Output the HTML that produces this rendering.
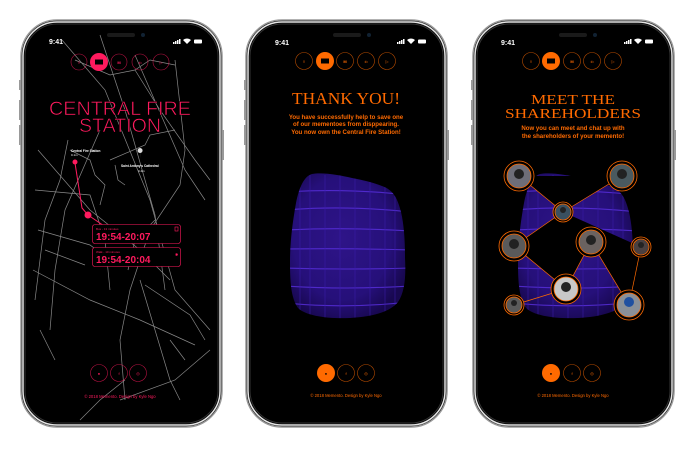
<!DOCTYPE html>
<html><head><meta charset="utf-8"><style>
html,body{margin:0;padding:0;background:#fff;width:696px;height:454px;overflow:hidden}
svg{display:block}
</style></head><body>
<svg width="696" height="454" viewBox="0 0 696 454" xmlns="http://www.w3.org/2000/svg" font-family="Liberation Sans, sans-serif">
<defs>
  <radialGradient id="stone" cx="0.45" cy="0.45" r="0.6">
    <stop offset="0" stop-color="#2e1488"/><stop offset="0.7" stop-color="#26107a"/><stop offset="1" stop-color="#180850"/>
  </radialGradient>
  <clipPath id="blobclip"><path d="M312,174 C322,172 340,175 352,178 C362,180 372,182 382,186 C394,190 398,200 401,212 C404,225 405,240 405,258 C406,275 405,292 398,302 C390,312 372,317 350,318 C328,319 306,316 298,308 C291,298 290,282 290,262 C290,240 293,220 296,203 C299,188 304,176 312,174 Z"/></clipPath>
  <g id="blob">
    <path d="M312,174 C322,172 340,175 352,178 C362,180 372,182 382,186 C394,190 398,200 401,212 C404,225 405,240 405,258 C406,275 405,292 398,302 C390,312 372,317 350,318 C328,319 306,316 298,308 C291,298 290,282 290,262 C290,240 293,220 296,203 C299,188 304,176 312,174 Z" fill="url(#stone)"/>
    <g clip-path="url(#blobclip)" stroke="#5a30e0" stroke-width="1.1" fill="none" opacity="0.8">
      <path d="M285,192 Q345,188 410,195"/><path d="M285,210 Q345,205 410,212"/>
      <path d="M285,230 Q345,227 410,231"/><path d="M285,249 Q345,248 410,250"/>
      <path d="M285,268 Q345,270 410,268"/><path d="M285,286 Q345,290 410,286"/>
      <path d="M285,303 Q345,309 410,302"/>
    </g>
    <g clip-path="url(#blobclip)" stroke="#3a1ca8" stroke-width="0.8" fill="none" opacity="0.7">
      <path d="M310,175V320M325,175V320M340,175V320M355,175V320M370,175V320M385,175V320M300,175V320M395,175V320"/>
    </g>
  </g>
  <g id="phone">
    <rect x="0" y="0" width="201" height="407" rx="36" fill="#000" stroke="#999" stroke-width="1.5"/>
    <rect x="2" y="2" width="197" height="403" rx="34" fill="none" stroke="#e6e6e6" stroke-width="1.5"/>
    <rect x="4" y="4" width="193" height="399" rx="32" fill="none" stroke="#333" stroke-width="1"/>
    <rect x="-2" y="60" width="2" height="10" fill="#999"/><rect x="-2" y="80" width="2" height="20" fill="#999"/><rect x="-2" y="105" width="2" height="20" fill="#999"/>
    <rect x="201" y="110" width="2" height="30" fill="#999"/>
  </g>
  <g id="status">
    <rect x="-14" y="-2" width="28" height="4" rx="2" fill="#1a1a1a"/>
    <circle cx="22" cy="0" r="2" fill="#123"/>
  </g>
</defs>

<!-- PHONE 1 -->
<use href="#phone" x="21" y="20"/>
<rect x="31" y="27" width="180" height="393" rx="27" fill="#000"/>
<g stroke="#888" stroke-width="0.7" fill="none">
  <path d="M62,40L105,90L150,200L175,290L210,330"/>
  <path d="M100,35L125,110L155,215L165,290"/>
  <path d="M135,55L185,170L205,200"/>
  <path d="M75,60L110,75L135,70L150,60L175,65"/>
  <path d="M175,60L185,150L180,185L150,230L130,290L120,340L125,400"/>
  <path d="M135,70L160,110L195,160L210,180"/>
  <path d="M68,140L60,180L45,220L35,300"/>
  <path d="M100,130L65,210L55,270L50,330"/>
  <path d="M38,150L90,210L140,250L170,280"/>
  <path d="M33,270L90,300L140,320L195,345"/>
  <path d="M35,190L90,195L105,240L110,290"/>
  <path d="M38,230L90,245L110,260"/>
  <path d="M45,250L85,265"/>
  <path d="M140,280L155,330L170,380L180,400"/>
  <path d="M145,285L190,315L205,340"/>
  <path d="M40,330L55,360"/>
  <path d="M120,400L175,380L210,350"/>
  <path d="M80,420L100,400L125,380"/>
  <path d="M170,340L185,360"/>
  <path d="M110,160L145,145L150,135L175,130"/>
  <path d="M115,165L118,180L125,185"/>
  <path d="M70,150L90,160L95,175L105,185L100,205"/>
  <path d="M155,220L135,240L128,270"/>
</g>
<path d="M75,163L82,208L88,215" stroke="#ff1a5e" stroke-width="1" fill="none"/>
<path d="M88,215L110,230" stroke="#ff1a5e" stroke-width="1"/>
<circle cx="75" cy="162" r="2.5" fill="#ff1a5e"/>
<circle cx="88" cy="215" r="3.5" fill="#ff1a5e"/>
<path d="M140,153a2.5,2.5 0 1 1 0.1,0L140,159Z" fill="#ddd"/>
<text x="71" y="152" font-size="3.2" fill="#fff" font-weight="bold">Central Fire Station</text>
<text x="71" y="156" font-size="3" fill="#fff">0.1m</text>
<text x="121" y="167" font-size="3.2" fill="#fff" font-weight="bold">Saint Antony's Cathedral</text>
<text x="138" y="172" font-size="3" fill="#fff">0.4m</text>
<text x="49" y="44" font-size="7" fill="#fff" font-weight="bold">9:41</text>
<g fill="#fff"><rect x="173" y="42" width="1.5" height="2"/><rect x="175" y="41" width="1.5" height="3"/><rect x="177" y="40" width="1.5" height="4"/><rect x="179" y="39" width="1.5" height="5"/>
<path d="M183,40a6,6 0 0 1 8,0l-4,4z"/><rect x="194" y="39.5" width="8" height="4" rx="1"/></g>
<use href="#status" x="121" y="35"/>
<g stroke="#ff1a5e" stroke-width="0.6" fill="none" opacity="0.7">
  <circle cx="79" cy="62" r="8"/><circle cx="119" cy="62" r="8"/><circle cx="140" cy="62" r="8"/><circle cx="161" cy="62" r="8"/>
</g>
<circle cx="99" cy="62" r="9" fill="#ff1a5e"/>
<rect x="95" y="59.5" width="8" height="5" fill="#000"/>
<g fill="#ff1a5e" font-size="4" text-anchor="middle"><text x="79" y="64">◊</text><text x="119" y="64" font-weight="bold">M</text><text x="140" y="64">ılı</text><text x="161" y="64">▷</text></g>
<text x="120" y="115" font-size="19" fill="#ff1a5e" text-anchor="middle" textLength="142" lengthAdjust="spacingAndGlyphs" stroke="#000" stroke-width="0.6">CENTRAL FIRE</text>
<text x="120" y="132" font-size="19" fill="#ff1a5e" text-anchor="middle" textLength="82" lengthAdjust="spacingAndGlyphs" stroke="#000" stroke-width="0.6">STATION</text>
<rect x="92.5" y="224.5" width="88" height="19" rx="2.5" fill="#000" stroke="#ff1a5e" stroke-width="0.6"/>
<rect x="92.5" y="247.5" width="88" height="19" rx="2.5" fill="#000" stroke="#ff1a5e" stroke-width="0.6"/>
<text x="96" y="230" font-size="3" fill="#ff1a5e">Bus - 13 minutes</text>
<text x="96" y="240" font-size="10" fill="#ff1a5e" font-weight="bold">19:54-20:07</text>
<text x="96" y="253" font-size="3" fill="#ff1a5e">Walk - 10 minutes</text>
<text x="96" y="263" font-size="10" fill="#ff1a5e" font-weight="bold">19:54-20:04</text>
<rect x="175" y="227" width="3" height="4" fill="none" stroke="#ff1a5e" stroke-width="0.6"/>
<text x="175" y="256" font-size="4" fill="#ff1a5e">✱</text>
<g stroke="#ff1a5e" stroke-width="0.6" fill="none" opacity="0.7">
  <circle cx="99" cy="373" r="8.5"/><circle cx="119" cy="373" r="8.5"/><circle cx="138" cy="373" r="8.5"/>
</g>
<g fill="#ff1a5e" font-size="4" text-anchor="middle"><text x="99" y="375">●</text><text x="119" y="375">f</text><text x="138" y="375">◎</text></g>
<text x="120" y="398" font-size="4.2" fill="#ff1a5e" text-anchor="middle">© 2018 Memento. Design by Kyle Ngo</text>

<!-- PHONE 2 -->
<use href="#phone" x="246" y="20"/>
<rect x="256" y="27" width="181" height="393" rx="27" fill="#000"/>
<text x="275" y="45" font-size="7" fill="#fff" font-weight="bold">9:41</text>
<g fill="#fff"><rect x="397" y="42" width="1.5" height="2"/><rect x="399" y="41" width="1.5" height="3"/><rect x="401" y="40" width="1.5" height="4"/><rect x="403" y="39" width="1.5" height="5"/>
<path d="M407,40a6,6 0 0 1 8,0l-4,4z"/><rect x="418" y="39.5" width="8" height="4" rx="1"/></g>
<use href="#status" x="347" y="35"/>
<g stroke="#ff6a00" stroke-width="0.6" fill="none" opacity="0.7">
  <circle cx="304" cy="61" r="8.5"/><circle cx="345" cy="61" r="8.5"/><circle cx="366" cy="61" r="8.5"/><circle cx="387" cy="61" r="8.5"/>
</g>
<circle cx="325" cy="61" r="9" fill="#ff6a00"/>
<rect x="321" y="58.5" width="8" height="5" fill="#000"/>
<g fill="#ff6a00" font-size="4" text-anchor="middle"><text x="304" y="63">◊</text><text x="345" y="63" font-weight="bold">M</text><text x="366" y="63">ılı</text><text x="387" y="63">▷</text></g>
<text x="346" y="104" font-size="17" fill="#ff6a00" text-anchor="middle" style="font-family:'Liberation Serif',serif" textLength="108" lengthAdjust="spacingAndGlyphs">THANK YOU!</text>
<g font-size="6.1" fill="#ff6a00" font-weight="bold" text-anchor="middle">
  <text x="346" y="119">You have successfully help to save one</text>
  <text x="346" y="126">of our mementoes from disppearing.</text>
  <text x="346" y="134">You now own the Central Fire Station!</text>
</g>
<use href="#blob"/>
<circle cx="326" cy="373" r="9" fill="#ff6a00"/>
<g stroke="#ff6a00" stroke-width="0.6" fill="none" opacity="0.7"><circle cx="346" cy="373" r="8.5"/><circle cx="366" cy="373" r="8.5"/></g>
<g font-size="4" text-anchor="middle"><text x="326" y="375" fill="#000">●</text><text x="346" y="375" fill="#ff6a00">f</text><text x="366" y="375" fill="#ff6a00">◎</text></g>
<text x="346" y="397" font-size="4.2" fill="#ff6a00" text-anchor="middle">© 2018 Memento. Design by Kyle Ngo</text>

<!-- PHONE 3 -->
<use href="#phone" x="473" y="20"/>
<rect x="483" y="27" width="181" height="393" rx="27" fill="#000"/>
<text x="501" y="45" font-size="7" fill="#fff" font-weight="bold">9:41</text>
<g fill="#fff"><rect x="624" y="42" width="1.5" height="2"/><rect x="626" y="41" width="1.5" height="3"/><rect x="628" y="40" width="1.5" height="4"/><rect x="630" y="39" width="1.5" height="5"/>
<path d="M634,40a6,6 0 0 1 8,0l-4,4z"/><rect x="645" y="39.5" width="8" height="4" rx="1"/></g>
<use href="#status" x="573" y="35"/>
<g stroke="#ff6a00" stroke-width="0.6" fill="none" opacity="0.7">
  <circle cx="531" cy="61" r="8.5"/><circle cx="572" cy="61" r="8.5"/><circle cx="592" cy="61" r="8.5"/><circle cx="613" cy="61" r="8.5"/>
</g>
<circle cx="551" cy="61" r="9" fill="#ff6a00"/>
<rect x="547" y="58.5" width="8" height="5" fill="#000"/>
<g fill="#ff6a00" font-size="4" text-anchor="middle"><text x="531" y="63">◊</text><text x="572" y="63" font-weight="bold">M</text><text x="592" y="63">ılı</text><text x="613" y="63">▷</text></g>
<text x="573" y="104" font-size="14" fill="#ff6a00" text-anchor="middle" style="font-family:'Liberation Serif',serif" textLength="84" lengthAdjust="spacingAndGlyphs">MEET THE</text>
<text x="573" y="118" font-size="14" fill="#ff6a00" text-anchor="middle" style="font-family:'Liberation Serif',serif" textLength="136" lengthAdjust="spacingAndGlyphs">SHAREHOLDERS</text>
<g font-size="6.1" fill="#ff6a00" font-weight="bold" text-anchor="middle">
  <text x="573" y="130">Now you can meet and chat up with</text>
  <text x="573" y="138">the shareholders of your memento!</text>
</g>
<use href="#blob" x="228" y="0"/>
<g stroke="#ff6a00" stroke-width="0.7">
  <path d="M519,176L563,212L622,176M563,212L514,246L566,289L591,242L629,305L641,247M566,289L514,305"/>
</g>
<g stroke="#ff6a00" stroke-width="0.8">
  <circle cx="519" cy="176" r="15" fill="#000"/><circle cx="519" cy="176" r="12" fill="#6e6e78"/>
  <circle cx="622" cy="176" r="15" fill="#000"/><circle cx="622" cy="176" r="12" fill="#4a5a60"/>
  <circle cx="563" cy="212" r="10" fill="#000"/><circle cx="563" cy="212" r="8" fill="#3a5060"/>
  <circle cx="514" cy="246" r="15" fill="#000"/><circle cx="514" cy="246" r="12" fill="#5a5a5a"/>
  <circle cx="591" cy="242" r="15" fill="#000"/><circle cx="591" cy="242" r="12" fill="#6a6260"/>
  <circle cx="641" cy="247" r="10" fill="#000"/><circle cx="641" cy="247" r="8" fill="#4a4040"/>
  <circle cx="566" cy="289" r="15" fill="#000"/><circle cx="566" cy="289" r="12" fill="#c8c8c8"/>
  <circle cx="514" cy="305" r="10" fill="#000"/><circle cx="514" cy="305" r="8" fill="#5a5a5a"/>
  <circle cx="629" cy="305" r="15" fill="#000"/><circle cx="629" cy="305" r="12" fill="#8a9098"/>
</g>
<g fill="#222"><circle cx="519" cy="174" r="5"/><circle cx="622" cy="174" r="5"/><circle cx="514" cy="244" r="5"/><circle cx="591" cy="240" r="5"/><circle cx="566" cy="287" r="5"/><circle cx="629" cy="302" r="5" fill="#2050a0"/><circle cx="563" cy="210" r="3"/><circle cx="641" cy="245" r="3"/><circle cx="514" cy="303" r="3"/></g>
<circle cx="551" cy="373" r="9" fill="#ff6a00"/>
<g stroke="#ff6a00" stroke-width="0.6" fill="none" opacity="0.7"><circle cx="572" cy="373" r="8.5"/><circle cx="592" cy="373" r="8.5"/></g>
<g font-size="4" text-anchor="middle"><text x="551" y="375" fill="#000">●</text><text x="572" y="375" fill="#ff6a00">f</text><text x="592" y="375" fill="#ff6a00">◎</text></g>
<text x="573" y="397" font-size="4.2" fill="#ff6a00" text-anchor="middle">© 2018 Memento. Design by Kyle Ngo</text>
</svg>
</body></html>
